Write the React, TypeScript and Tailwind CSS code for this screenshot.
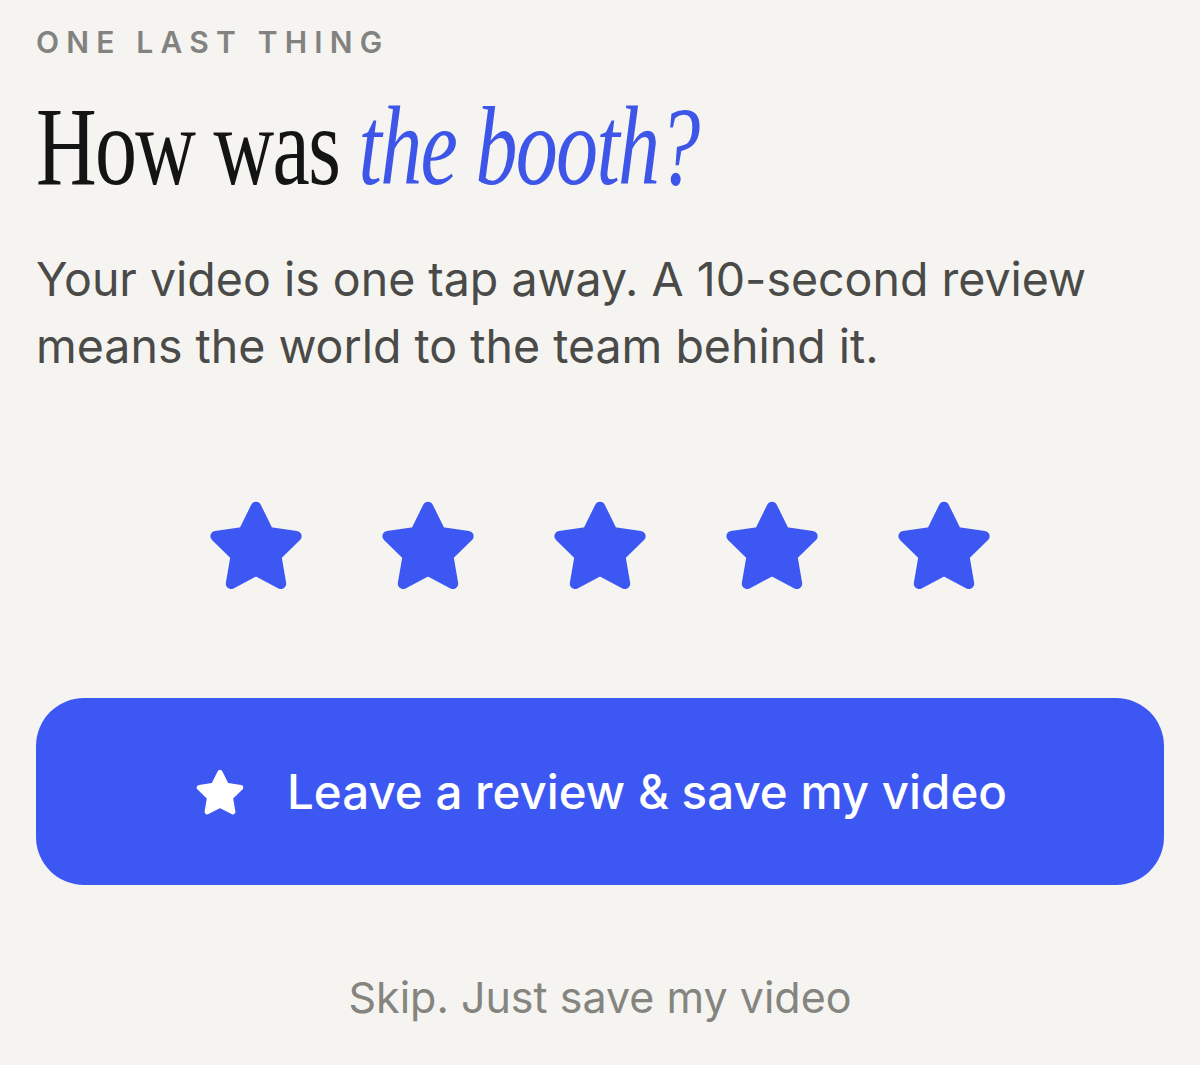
import React from "react";

const sans = { fontFamily: 'Inter, "Noto Sans", sans-serif' };

function StarIcon({ className }: { className?: string }) {
  return (
    <svg viewBox="0 0 24 24" className={className} fill="currentColor" stroke="currentColor" strokeWidth={2.4} strokeLinejoin="round">
      <path d="M12 3.4L14.82 9.12L21.13 10.03L16.56 14.48L17.64 20.77L12 17.8L6.36 20.77L7.44 14.48L2.87 10.03L9.18 9.12Z" />
    </svg>
  );
}

export default function App() {
  return (
    <div className="min-h-[1065px] w-[1200px] bg-[#f5f4f0] px-[36px] pt-[22px]" style={sans}>
      <p className="text-[30px] font-semibold uppercase tracking-[0.24em] text-[#828280] leading-[40px]">
        One last thing
      </p>

      <h1
        className="mt-[26px] text-[112px] leading-[116px] tracking-[-0.02em] text-[#141414] whitespace-nowrap"
        style={{ fontFamily: '"Liberation Serif", "DejaVu Serif", serif' }}
      >
        <span className="inline-block origin-left scale-x-[0.75]">
          How was <em className="italic text-[#3d56e8]">the booth?</em>
        </span>
      </h1>

      <p className="mt-[42px] max-w-[1110px] text-[46.5px] leading-[67px] text-[#4a4a48]">
        Your video is one tap away. A 10-second review means the world to the team behind it.
      </p>

      <div className="mt-[112px] flex items-center justify-center gap-[66px]">
        {[0, 1, 2, 3, 4].map((i) => (
          <StarIcon key={i} className="h-[106px] w-[106px] text-[#3d58f2]" />
        ))}
      </div>

      <button className="mt-[100px] flex h-[187px] w-full items-center justify-center gap-[40px] rounded-[48px] bg-[#3d58f2] text-white">
        <StarIcon className="h-[54px] w-[54px] text-white" />
        <span className="text-[47.5px] font-medium">Leave a review &amp; save my video</span>
      </button>

      <p className="mt-[80px] text-center text-[43px] text-[#858580]">Skip. Just save my video</p>
    </div>
  );
}
